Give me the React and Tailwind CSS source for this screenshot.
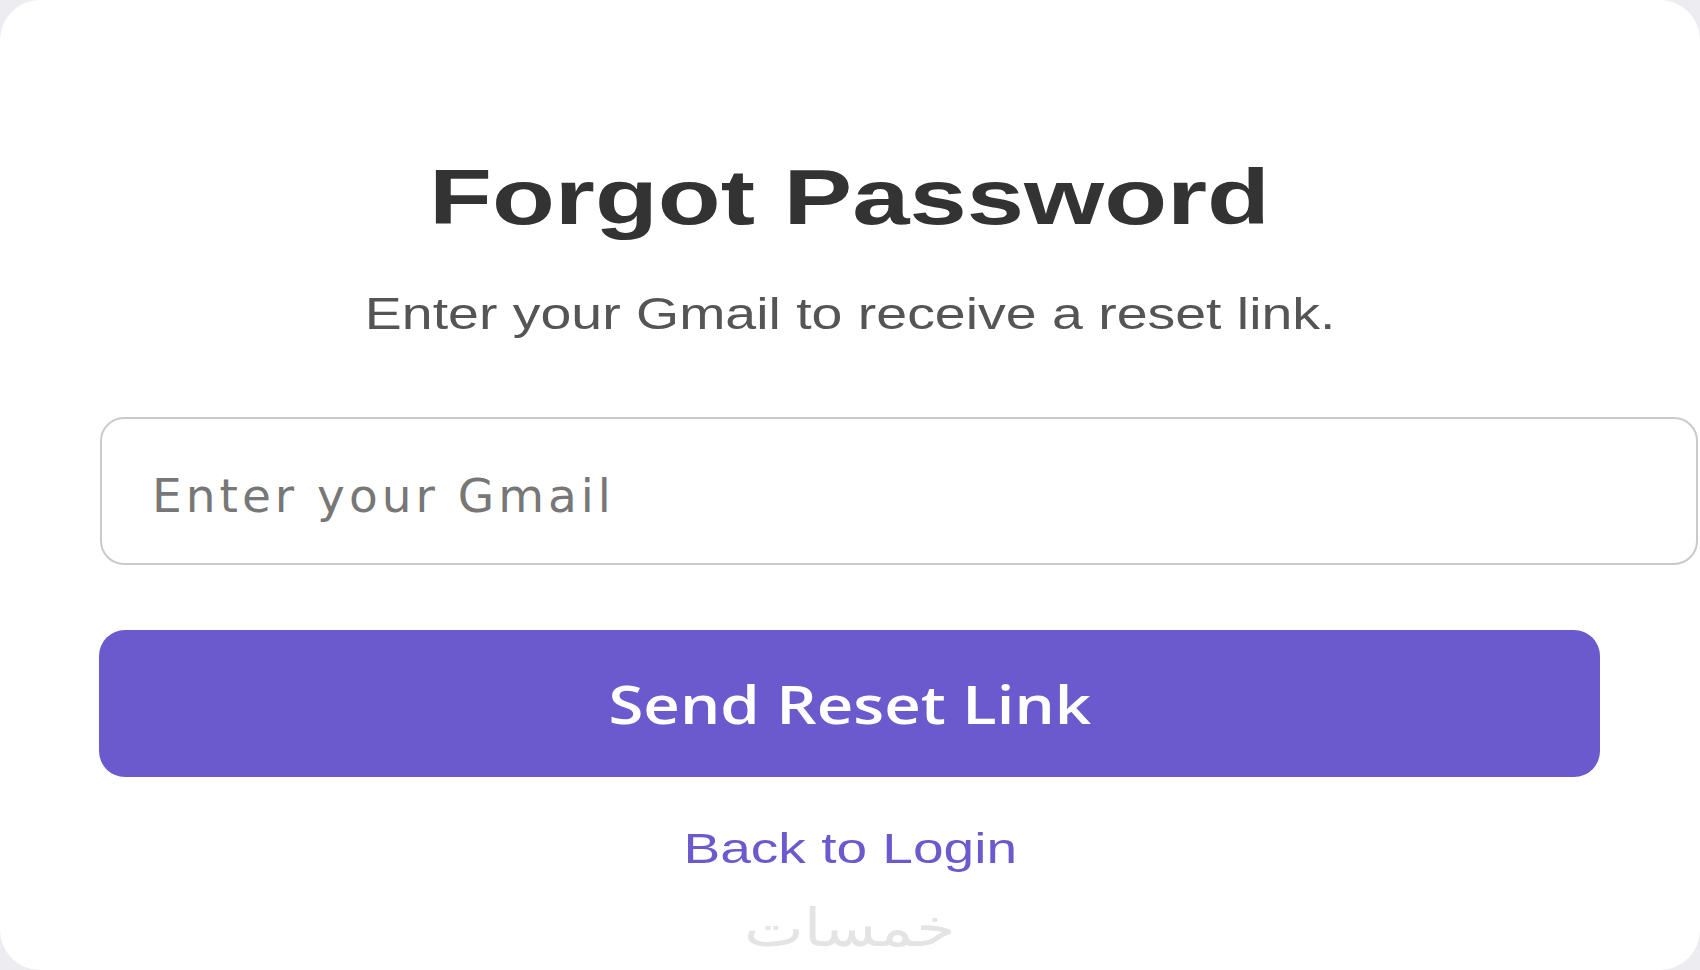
export default function App() {
  return (
    <div className="h-[970px] w-[1700px] bg-[#ececf1] overflow-hidden">
      <div className="relative h-full w-full rounded-[40px] bg-white pt-[158px]">
        {/* heading */}
        <h1 className="text-center font-['Liberation_Sans',Arial,sans-serif] text-[78px] font-bold leading-none text-[#333]">
          <span className="inline-block scale-x-[1.32]">Forgot Password</span>
        </h1>
        <p className="mt-[56px] text-center font-['Liberation_Sans',Arial,sans-serif] text-[44px] leading-none text-[#555]">
          <span className="inline-block scale-x-[1.26]">Enter your Gmail to receive a reset link.</span>
        </p>

        <form className="mt-[81px] px-[100px]" onSubmit={(e) => e.preventDefault()}>
          <input
            type="email"
            placeholder="Enter your Gmail"
            className="block h-[148px] w-[1598px] rounded-[24px] border-2 border-[#cacaca] bg-white pl-[50px] pt-[8px] font-['DejaVu_Sans',sans-serif] text-[47px] tracking-[4px] text-[#333] outline-none placeholder:text-[#777]"
          />
          <button
            type="submit"
            className="mt-[65px] -ml-[1px] flex h-[147px] w-[1501px] items-center justify-center rounded-[26px] bg-[#6a5acd] font-['Open_Sans',sans-serif] text-[52px] font-semibold text-white"
          >
            <span className="inline-block scale-x-[1.22]">Send Reset Link</span>
          </button>
        </form>

        <div className="mt-[50px] text-center font-['Liberation_Sans',Arial,sans-serif] text-[43px] leading-none text-[#6a5acd]">
          <a href="#" className="inline-block scale-x-[1.28]">Back to Login</a>
        </div>

        {/* watermark */}
        <div
          dir="rtl"
          className="absolute left-0 right-0 top-[902px] text-center font-['DejaVu_Sans',sans-serif] text-[52px] leading-none text-[#e4e4e4]"
        >
          <span className="inline-block scale-x-[1.22]">خمسات</span>
        </div>
      </div>
    </div>
  );
}
